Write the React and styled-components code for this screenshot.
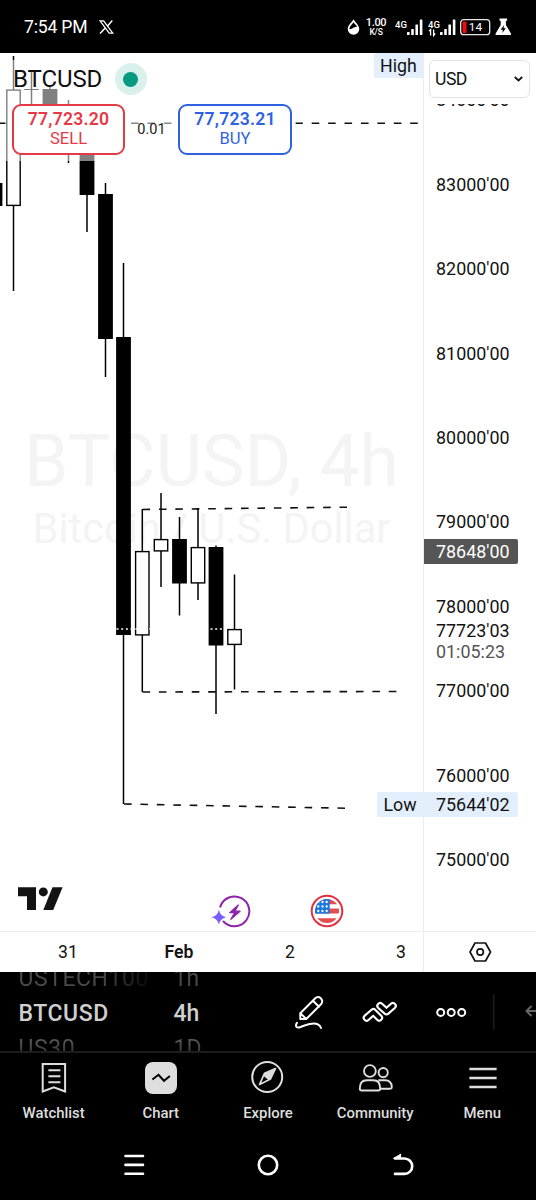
import React from "react";
import styled, { createGlobalStyle } from "styled-components";

const GlobalStyle = createGlobalStyle`
  * {
    box-sizing: border-box;
  }
  body {
    margin: 0;
    background: #000;
    font-family: Roboto, "Liberation Sans", sans-serif;
  }
  svg {
    display: block;
    flex-shrink: 0;
  }
`;

const Screen = styled.div`
  display: flex;
  flex-direction: column;
  width: 536px;
  height: 1200px;
  overflow: hidden;
  background: #000;
`;

/* status bar */
const StatusBar = styled.header`
  display: flex;
  align-items: center;
  height: 53px;
  padding: 1px 23px 0 24px;
  color: #fff;
`;

const Clock = styled.div`
  font-size: 17.6px;
  line-height: 20px;
  letter-spacing: -0.2px;
  margin-right: 12px;
`;

const StatusRight = styled.div`
  display: flex;
  align-items: center;
  margin-left: auto;
`;

const NetSpeed = styled.div`
  width: 22px;
  margin: 0 8px 0 5px;
  text-align: center;
  font-size: 11px;
  font-weight: 500;
  line-height: 10px;
  letter-spacing: -0.3px;
  small {
    display: block;
    font-size: 8.5px;
    line-height: 8px;
    letter-spacing: -0.2px;
  }
`;

/* chart */
const ChartGrid = styled.main`
  display: grid;
  grid-template-columns: 424px 112px;
  grid-template-rows: 878px 41px;
  height: 919px;
  background: #fff;
  color: #131313;
`;

const Pane = styled.section`
  position: relative;
  overflow: hidden;
  border-right: 1px solid #ececec;
`;

const Watermark = styled.div`
  position: absolute;
  inset: 0;
  display: flex;
  flex-direction: column;
  align-items: center;
  padding-top: 365px;
  color: #f4f4f4;
  white-space: nowrap;
`;

const WatermarkTitle = styled.div`
  font-size: 71.4px;
  line-height: 87px;
`;

const WatermarkText = styled.div`
  font-size: 41.6px;
  line-height: 48px;
`;

const Drawing = styled.svg`
  position: absolute;
  top: 0;
  left: 0;
`;

const Legend = styled.div`
  position: absolute;
  top: 7px;
  left: 5px;
  width: 291px;
  height: 101px;
  padding: 2px 0 0 7px;
  background: rgba(255, 255, 255, 0.5);
`;

const SymbolRow = styled.div`
  display: flex;
  align-items: center;
  height: 34px;
  padding-left: 1px;
  font-size: 24px;
  letter-spacing: -0.1px;
  color: #0f0f0f;
`;

const MarketStatus = styled.span`
  display: flex;
  align-items: center;
  justify-content: center;
  width: 32px;
  height: 32px;
  margin-left: 12.5px;
  border-radius: 50%;
  background: #daf0ec;
  &::after {
    content: "";
    width: 15px;
    height: 15px;
    border-radius: 50%;
    background: #089981;
  }
`;

const OrderRow = styled.div`
  display: flex;
  align-items: center;
  margin-top: 8px;
`;

const OrderButton = styled.button`
  width: ${(props) => props.$width}px;
  height: 51px;
  padding: 0 0 1px;
  border: 2px solid ${(props) => props.$color};
  border-radius: 9px;
  background: #fff;
  color: ${(props) => props.$color};
  font-family: inherit;
  font-size: 16.6px;
  line-height: 20px;
  b {
    display: block;
    font-size: 17.6px;
    font-weight: 600;
    line-height: 19px;
    letter-spacing: 0.2px;
  }
`;

const Spread = styled.div`
  width: 53px;
  text-align: center;
  font-size: 14.5px;
  color: #222;
`;

const PaneTag = styled.div`
  position: absolute;
  right: 0;
  top: ${(props) => props.$top}px;
  display: flex;
  align-items: center;
  justify-content: center;
  width: ${(props) => props.$width}px;
  height: 25px;
  border-radius: 2px 0 0 2px;
  background: #e3effd;
  font-size: 17.8px;
`;

const LogoBadge = styled.div`
  position: absolute;
  left: ${(props) => props.$left}px;
  top: ${(props) => props.$top}px;
`;

/* price scale */
const PriceScale = styled.aside`
  position: relative;
  overflow: hidden;
  padding-top: 4.8px;
`;

const Price = styled.div`
  display: flex;
  align-items: center;
  height: 84.4px;
  padding-left: 12px;
  font-size: 17.9px;
`;

const PriceTag = styled.div`
  position: absolute;
  left: 0;
  top: ${(props) => props.$top}px;
  display: flex;
  align-items: center;
  width: 94px;
  height: 25px;
  padding-left: 12px;
  border-radius: 0 2px 2px 0;
  background: ${(props) => props.$bg || "transparent"};
  color: ${(props) => props.$color || "#131313"};
  font-size: 17.9px;
`;

const ScaleHeader = styled.div`
  position: absolute;
  top: 0;
  left: 0;
  width: 100%;
  height: 51px;
  padding: 7px 6px 0 5px;
  background: #fff;
`;

const CurrencySelect = styled.div`
  display: flex;
  align-items: center;
  justify-content: space-between;
  height: 38px;
  padding: 0 6px 1px 5px;
  border: 1px solid #e3e3e3;
  border-radius: 6px;
  font-size: 17.6px;
  letter-spacing: -0.5px;
`;

/* time scale */
const TimeScale = styled.div`
  display: flex;
  align-items: center;
  border-top: 1px solid #ececec;
  border-right: 1px solid #ececec;
  padding-left: 12.5px;
`;

const TimeLabel = styled.span`
  width: 111px;
  flex-shrink: 0;
  text-align: center;
  font-size: 17.6px;
  font-weight: ${(props) => (props.$bold ? 600 : 400)};
`;

const ScaleSettings = styled.div`
  display: flex;
  align-items: center;
  justify-content: center;
  border-top: 1px solid #ececec;
`;

/* toolbar */
const Toolbar = styled.div`
  display: flex;
  height: 81px;
  padding-left: 18.5px;
  border-bottom: 2px solid #1d1d1d;
  overflow: hidden;
`;

const Wheel = styled.div`
  display: flex;
  flex-direction: column;
  width: ${(props) => props.$width}px;
  margin-top: -11px;
  white-space: nowrap;
  font-size: 23px;
  line-height: 35px;
  letter-spacing: ${(props) => props.$spacing || 0}px;
`;

const WheelItem = styled.div`
  height: 35px;
  flex-shrink: 0;
  color: transparent;
  background: ${(props) => props.$fill};
  background-clip: text;
  -webkit-background-clip: text;
`;

const WheelCurrent = styled.div`
  height: 35px;
  flex-shrink: 0;
  font-weight: 500;
  color: #cfcfcf;
`;

/* bottom navigation */
const TabBar = styled.nav`
  display: flex;
  height: 77px;
`;

const Tab = styled.div`
  display: flex;
  flex-direction: column;
  align-items: center;
  width: 107.2px;
  padding-top: 8px;
  color: #dedede;
  font-size: 14.9px;
  font-weight: 500;
  line-height: 18px;
  letter-spacing: 0;
  svg {
    margin-bottom: 9px;
  }
`;

const SystemNav = styled.footer`
  display: flex;
  align-items: center;
  justify-content: space-between;
  height: 69px;
  padding: 0 119px 0 119px;
`;

// x is the centre of the candle
const candles = [
  { x: -5, high: 183, top: 183, bottom: 206, low: 206, down: true },
  { x: 13.5, high: 56, top: 89.5, bottom: 206, low: 291 },
  { x: 31.5, high: 70, top: 89, bottom: 90, low: 130, down: true },
  { x: 50, high: 86, top: 89, bottom: 140, low: 150, down: true },
  { x: 68.5, high: 100, top: 120, bottom: 150, low: 163, down: true },
  { x: 87, high: 140, top: 140, bottom: 195, low: 232, down: true },
  { x: 105.5, high: 183, top: 194, bottom: 339, low: 377, down: true },
  { x: 123.5, high: 263, top: 337, bottom: 635, low: 804, down: true },
  { x: 142.3, high: 509, top: 551, bottom: 635.5, low: 692 },
  { x: 161, high: 493, top: 539, bottom: 551.5, low: 587 },
  { x: 179.5, high: 517, top: 539, bottom: 583.5, low: 615.5, down: true },
  { x: 198, high: 508, top: 547, bottom: 583.5, low: 600 },
  { x: 216, high: 545.5, top: 547, bottom: 645.5, low: 714, down: true },
  { x: 234.5, high: 574.5, top: 629, bottom: 645, low: 689.5 },
];

const prices = [84, 83, 82, 81, 80, 79, 78, 77, 76, 75];

const Candle = ({ x, high, top, bottom, low, down }) => (
  <g>
    <path d={`M${x} ${high}V${low}`} stroke="#000" strokeWidth="1.5" />
    {down ? (
      <rect x={x - 7.4} y={top} width="14.8" height={bottom - top} />
    ) : (
      <rect
        x={x - 6.7}
        y={top + 0.6}
        width="13.4"
        height={bottom - top - 1.2}
        fill="#fff"
        stroke="#000"
        strokeWidth="1.4"
      />
    )}
  </g>
);

const Signal = ({ arrows }) => (
  <svg width="28" height="20" viewBox="0 0 28 20" fill="#fff">
    <text x="0" y="10.5" fontSize="9.5" fontWeight="500" fontFamily="Roboto">
      4G
    </text>
    {arrows && (
      <path
        d="M2.6 18.5v-6l-1.6 1.6M5.6 12.5v6l1.6-2"
        fill="none"
        stroke="#fff"
        strokeWidth="1.3"
      />
    )}
    <rect x="12" y="15" width="2.6" height="3" rx="0.5" />
    <rect x="16.2" y="12" width="2.6" height="6" rx="0.5" />
    <rect x="20.4" y="7.5" width="2.6" height="10.5" rx="0.5" />
    <rect x="24.8" y="2.5" width="2.6" height="15.5" rx="0.5" />
  </svg>
);

const BatteryIcon = styled.svg`
  margin-right: 3px;
`;

const StatusIcons = () => (
  <StatusRight>
    <svg width="13" height="18" viewBox="0 0 13 18">
      <path
        d="M6.5 1.2C4.6 4.4 0.7 7.6 0.7 11.1a5.8 5.6 0 0 0 11.6 0C12.3 7.6 8.4 4.4 6.5 1.2Z"
        fill="#fff"
      />
      <path d="M6.5 4.2C5 6.6 2.4 8.4 2.3 11.1c2.5 0.8 4.7-2.6 7.9-2.6C9.3 7 7.5 5.8 6.5 4.2Z" />
    </svg>
    <NetSpeed>
      1.00
      <small>K/S</small>
    </NetSpeed>
    <Signal />
    <svg width="5" height="1" />
    <Signal arrows />
    <BatteryIcon width="35" height="18" viewBox="0 0 35 18">
      <rect
        x="4.7"
        y="1.7"
        width="29"
        height="15"
        rx="3"
        fill="none"
        stroke="#e8e8e8"
        strokeWidth="1.3"
      />
      <rect x="6.5" y="3.5" width="4" height="11.4" rx="1" fill="#f00d0d" />
      <text
        x="19.5"
        y="13.3"
        fill="#fff"
        fontSize="11.8"
        fontFamily="Roboto"
        textAnchor="middle"
      >
        14
      </text>
    </BatteryIcon>
    <svg width="19" height="18" viewBox="1.5 0 19 18">
      <path d="M0.3 6.5q1.4 0 1.4 2.5t-1.4 2.500Z" fill="#e8e8e8" />
      <path
        d="M7 0.5h7.6v2.2h-1.2v4.3l4.900 8.200q0.900 1.900-1 1.900h-13q-1.900 0-1-1.900l4.900-8.200v-4.300H7Z"
        fill="#fff"
      />
      <path d="M11.6 7 8.1 11.7h2.3L9.8 15 13.3 10.3h-2.3Z" />
    </svg>
  </StatusRight>
);

const ChartDrawing = () => (
  <Drawing width="423" height="878" viewBox="0 53 423 878">
    <g stroke="#111" strokeWidth="1.6" strokeDasharray="7.6 8.82" fill="none">
      <path d="M-0.3 123.3H418" />
      <path d="M142.5 509.5L347 507.2" />
      <path d="M142.5 692L397 691.5" />
      <path d="M124 804L345 808.2" />
    </g>
    {candles.map((candle) => (
      <Candle key={candle.x} {...candle} />
    ))}
    <path
      d="M116.5 629H150M210.5 629H224"
      stroke="#fff"
      strokeWidth="1.6"
      strokeDasharray="2 2.7"
    />
  </Drawing>
);

const TradingLogo = () => (
  <svg width="46" height="24" viewBox="17 886 46 24" fill="#131313">
    <path d="M18 887.3H36V910H27V896.3H18Z" />
    <circle cx="43.3" cy="891.9" r="4.5" />
    <path d="M52.5 887.3H62.6L53.2 910H43.3Z" />
  </svg>
);

const NewsIcon = () => (
  <svg width="40" height="34" viewBox="211 895 40 34">
    <path
      d="M220.3 906.6A14.9 14.9 0 1 1 223.5 921.5"
      fill="none"
      stroke="#8e24aa"
      strokeWidth="2"
      strokeLinecap="round"
    />
    <path
      d="M238.3 905 229.8 912.7H234.8L230.8 919.3 240 911.2H234.9Z"
      fill="#8e24aa"
      stroke="#8e24aa"
      strokeWidth="1.3"
      strokeLinejoin="round"
    />
    <path
      d="M218.9 909.8Q220.2 916 226 917.2 220.2 918.5 218.9 924.5 217.6 918.5 211.6 917.2 217.6 916 218.9 909.8Z"
      fill="#7a5cff"
    />
  </svg>
);

const FlagIcon = () => (
  <svg width="34" height="34" viewBox="310 894 34 34">
    <clipPath id="flag">
      <circle cx="327" cy="911" r="12" />
    </clipPath>
    <circle cx="327" cy="911" r="15.3" fill="#fff" stroke="#e0303f" strokeWidth="2" />
    <g clipPath="url(#flag)">
      <path
        d="M314 898H340V904.3H314ZM314 908.6H340V913.6H314ZM314 918.2H340V924H314Z"
        fill="#e34c50"
      />
      <rect x="314" y="898" width="15.7" height="15.6" fill="#1b78dd" />
      {[902, 906.5, 911].map((y) =>
        [318.3, 322.5, 326.7].map((x) => (
          <circle key={`${x}-${y}`} cx={x} cy={y} r="1.15" fill="#fff" />
        ))
      )}
    </g>
  </svg>
);

const HexIcon = () => (
  <svg
    width="24"
    height="22"
    viewBox="468 941 24 22"
    fill="none"
    stroke="#131313"
    strokeWidth="1.7"
  >
    <path d="M470 952 475 943H485.5L490.5 952 485.5 961H475Z" strokeLinejoin="round" />
    <circle cx="480.2" cy="952" r="3.2" />
  </svg>
);

const ToolIcons = () => (
  <svg
    width="246"
    height="79"
    viewBox="290 972 246 79"
    fill="none"
    stroke="#fff"
    strokeWidth="2"
    strokeLinecap="round"
    strokeLinejoin="round"
  >
    <path d="M300.3 1013.3 315 998.5Q317.8 995.7 320.8 998.2 323.6 1001.2 321 1004.3L306.3 1019H300.3ZM313 1000.7 319 1006.7M300.3 1013.3 306.3 1019" />
    <path d="M297 1022.8C294.5 1026.5 297 1028.6 300.5 1027 307 1024.3 318 1020.5 321 1028" />
    <path d="M366.6 1017.8 373.4 1011.9 379.2 1017.8" strokeWidth="7.8" />
    <path d="M366.6 1017.8 373.4 1011.9 379.2 1017.8" stroke="#000" strokeWidth="3.6" />
    <path d="M380.2 1005.9 386.5 1011.5 392.9 1005.9" strokeWidth="7.8" />
    <path d="M380.2 1005.9 386.5 1011.5 392.9 1005.9" stroke="#000" strokeWidth="3.6" />
    <circle cx="440.7" cy="1012.4" r="3.5" />
    <circle cx="451.2" cy="1012.4" r="3.5" />
    <circle cx="461.7" cy="1012.4" r="3.5" />
    <path d="M493.8 995V1029.5" stroke="#2c2c2c" strokeWidth="1" />
    <path d="M538 1011H526.8M531 1006.5 526.5 1011 531 1015.5" stroke="#666" />
  </svg>
);

const WatchlistIcon = () => (
  <svg
    width="34"
    height="34"
    viewBox="36.6 1061 34 34"
    fill="none"
    stroke="currentColor"
    strokeWidth="2"
  >
    <path d="M42.3 1064H64.7V1091.5L53.5 1087.2 42.3 1091.5ZM48 1070.3H60M48 1076.3H60M48 1082.3H60" />
  </svg>
);

const ChartIcon = () => (
  <svg width="34" height="34" viewBox="143.8 1061 34 34">
    <rect x="144.800" y="1062" width="32" height="32" rx="8" fill="currentColor" />
    <path
      d="M152.2 1079.5 158.3 1074.8 163.8 1080.8 169.7 1076"
      fill="none"
      stroke="#000"
      strokeWidth="2"
    />
  </svg>
);

const ExploreIcon = () => (
  <svg
    width="34"
    height="34"
    viewBox="251 1061 34 34"
    fill="none"
    stroke="currentColor"
    strokeWidth="2"
  >
    <circle cx="267.2" cy="1077" r="15" />
    <path
      d="M275.4 1068.6 264.6 1073.2 259.6 1084.4 270.5 1079Z"
      strokeWidth="1.7"
      strokeLinejoin="round"
    />
    <path
      d="M275.4 1068.6 264.6 1073.2 263.5 1076 268.5 1080 270.5 1079Z"
      fill="currentColor"
      strokeWidth="0"
    />
  </svg>
);

const CommunityIcon = () => (
  <svg
    width="36"
    height="34"
    viewBox="357.2 1061 36 34"
    fill="none"
    stroke="currentColor"
    strokeWidth="1.9"
  >
    <circle cx="370.1" cy="1071" r="5.9" />
    <circle cx="383.4" cy="1072.6" r="4.6" />
    <path d="M362 1090.5Q360 1090.5 360 1088.5C360 1083.5 362.5 1080.3 367 1080.3H373.5C378 1080.3 380.4 1083.5 380.4 1088.5Q380.4 1090.5 378.4 1090.5ZM378.5 1080.3H385.3C389.5 1080.3 391.8 1083 392 1087Q392 1088.8 390 1088.8H380.5" />
  </svg>
);

const MenuIcon = () => (
  <svg
    width="34"
    height="34"
    viewBox="465.4 1061 34 34"
    stroke="currentColor"
    strokeWidth="2.4"
  >
    <path d="M469.8 1069H497M469.8 1078H497M469.8 1087H497" />
  </svg>
);

const tabs = [
  { label: "Watchlist", Icon: WatchlistIcon },
  { label: "Chart", Icon: ChartIcon },
  { label: "Explore", Icon: ExploreIcon },
  { label: "Community", Icon: CommunityIcon },
  { label: "Menu", Icon: MenuIcon },
];

const App = () => {
  return (
    <>
      <GlobalStyle />
      <Screen>
        <StatusBar>
          <Clock>7:54 PM</Clock>
          <svg width="15" height="14" viewBox="0 0 15 14" fill="none" stroke="#fff">
            <path d="M1 0.8H4.6L13.8 13.2H10.2Z" strokeWidth="1.3" />
            <path d="M13.3 0.5 8.3 6.2M6.3 8 1 13.5" strokeWidth="1.5" />
          </svg>
          <StatusIcons />
        </StatusBar>

        <ChartGrid>
          <Pane>
            <Watermark>
              <WatermarkTitle>BTCUSD, 4h</WatermarkTitle>
              <WatermarkText>Bitcoin / U.S. Dollar</WatermarkText>
            </Watermark>
            <ChartDrawing />
            <Legend>
              <SymbolRow>
                BTCUSD
                <MarketStatus />
              </SymbolRow>
              <OrderRow>
                <OrderButton $color="#e63946" $width={113}>
                  <b>77,723.20</b>
                  SELL
                </OrderButton>
                <Spread>0.01</Spread>
                <OrderButton $color="#2f62e3" $width={114}>
                  <b>77,723.21</b>
                  BUY
                </OrderButton>
              </OrderRow>
            </Legend>
            <PaneTag $top={0} $width={49}>
              High
            </PaneTag>
            <PaneTag $top={739} $width={46}>
              Low
            </PaneTag>
            <LogoBadge $left={17} $top={833}>
              <TradingLogo />
            </LogoBadge>
            <LogoBadge $left={211} $top={842}>
              <NewsIcon />
            </LogoBadge>
            <LogoBadge $left={310} $top={841}>
              <FlagIcon />
            </LogoBadge>
          </Pane>

          <PriceScale>
            {prices.map((price) => (
              <Price key={price}>{price}000'00</Price>
            ))}
            <PriceTag $top={486} $bg="#555" $color="#fff">
              78648'00
            </PriceTag>
            <PriceTag $top={565}>77723'03</PriceTag>
            <PriceTag $top={586} $color="#555">
              01:05:23
            </PriceTag>
            <PriceTag $top={739} $bg="#e3effd">
              75644'02
            </PriceTag>
            <ScaleHeader>
              <CurrencySelect>
                USD
                <svg width="9" height="6" viewBox="0 0 9 6" fill="none">
                  <path d="M0.8 1 4.5 4.5 8.2 1" stroke="#131313" strokeWidth="1.8" />
                </svg>
              </CurrencySelect>
            </ScaleHeader>
          </PriceScale>

          <TimeScale>
            <TimeLabel>31</TimeLabel>
            <TimeLabel $bold>Feb</TimeLabel>
            <TimeLabel>2</TimeLabel>
            <TimeLabel>3</TimeLabel>
          </TimeScale>
          <ScaleSettings>
            <HexIcon />
          </ScaleSettings>
        </ChartGrid>

        <Toolbar>
          <Wheel $width={155} $spacing={0.55}>
            <WheelItem $fill="linear-gradient(90deg, #4a4a4a 80px, #000 138px)">
              USTECH100
            </WheelItem>
            <WheelCurrent>BTCUSD</WheelCurrent>
            <WheelItem $fill="linear-gradient(#5c5c5c 20%, #222 80%)">US30</WheelItem>
          </Wheel>
          <Wheel $width={116.5}>
            <WheelItem $fill="#4a4a4a">1h</WheelItem>
            <WheelCurrent>4h</WheelCurrent>
            <WheelItem $fill="linear-gradient(#5c5c5c 20%, #222 80%)">1D</WheelItem>
          </Wheel>
          <ToolIcons />
        </Toolbar>

        <TabBar>
          {tabs.map(({ label, Icon }) => (
            <Tab key={label}>
              <Icon />
              {label}
            </Tab>
          ))}
        </TabBar>

        <SystemNav>
          <svg
            width="30"
            height="30"
            viewBox="119 1149.5 30 30"
            stroke="#fff"
            strokeWidth="2.6"
            strokeLinecap="round"
          >
            <path d="M125.5 1155.5H143M125.5 1164.4H143M125.5 1173.3H143" />
          </svg>
          <svg
            width="30"
            height="30"
            viewBox="253 1149.5 30 30"
            fill="none"
            stroke="#fff"
            strokeWidth="2.6"
          >
            <circle cx="268" cy="1164.5" r="9.2" />
          </svg>
          <svg
            width="30"
            height="30"
            viewBox="387 1149.5 30 30"
            fill="none"
            stroke="#fff"
            strokeWidth="2.6"
            strokeLinecap="round"
          >
            <path d="M395 1158H404.5A7.7 7.7 0 0 1 404.5 1173.4H395" />
            <path d="M394.5 1157.5 400.5 1154V1158Z" fill="#fff" strokeWidth="1.2" />
          </svg>
        </SystemNav>
      </Screen>
    </>
  );
};

export default App;
